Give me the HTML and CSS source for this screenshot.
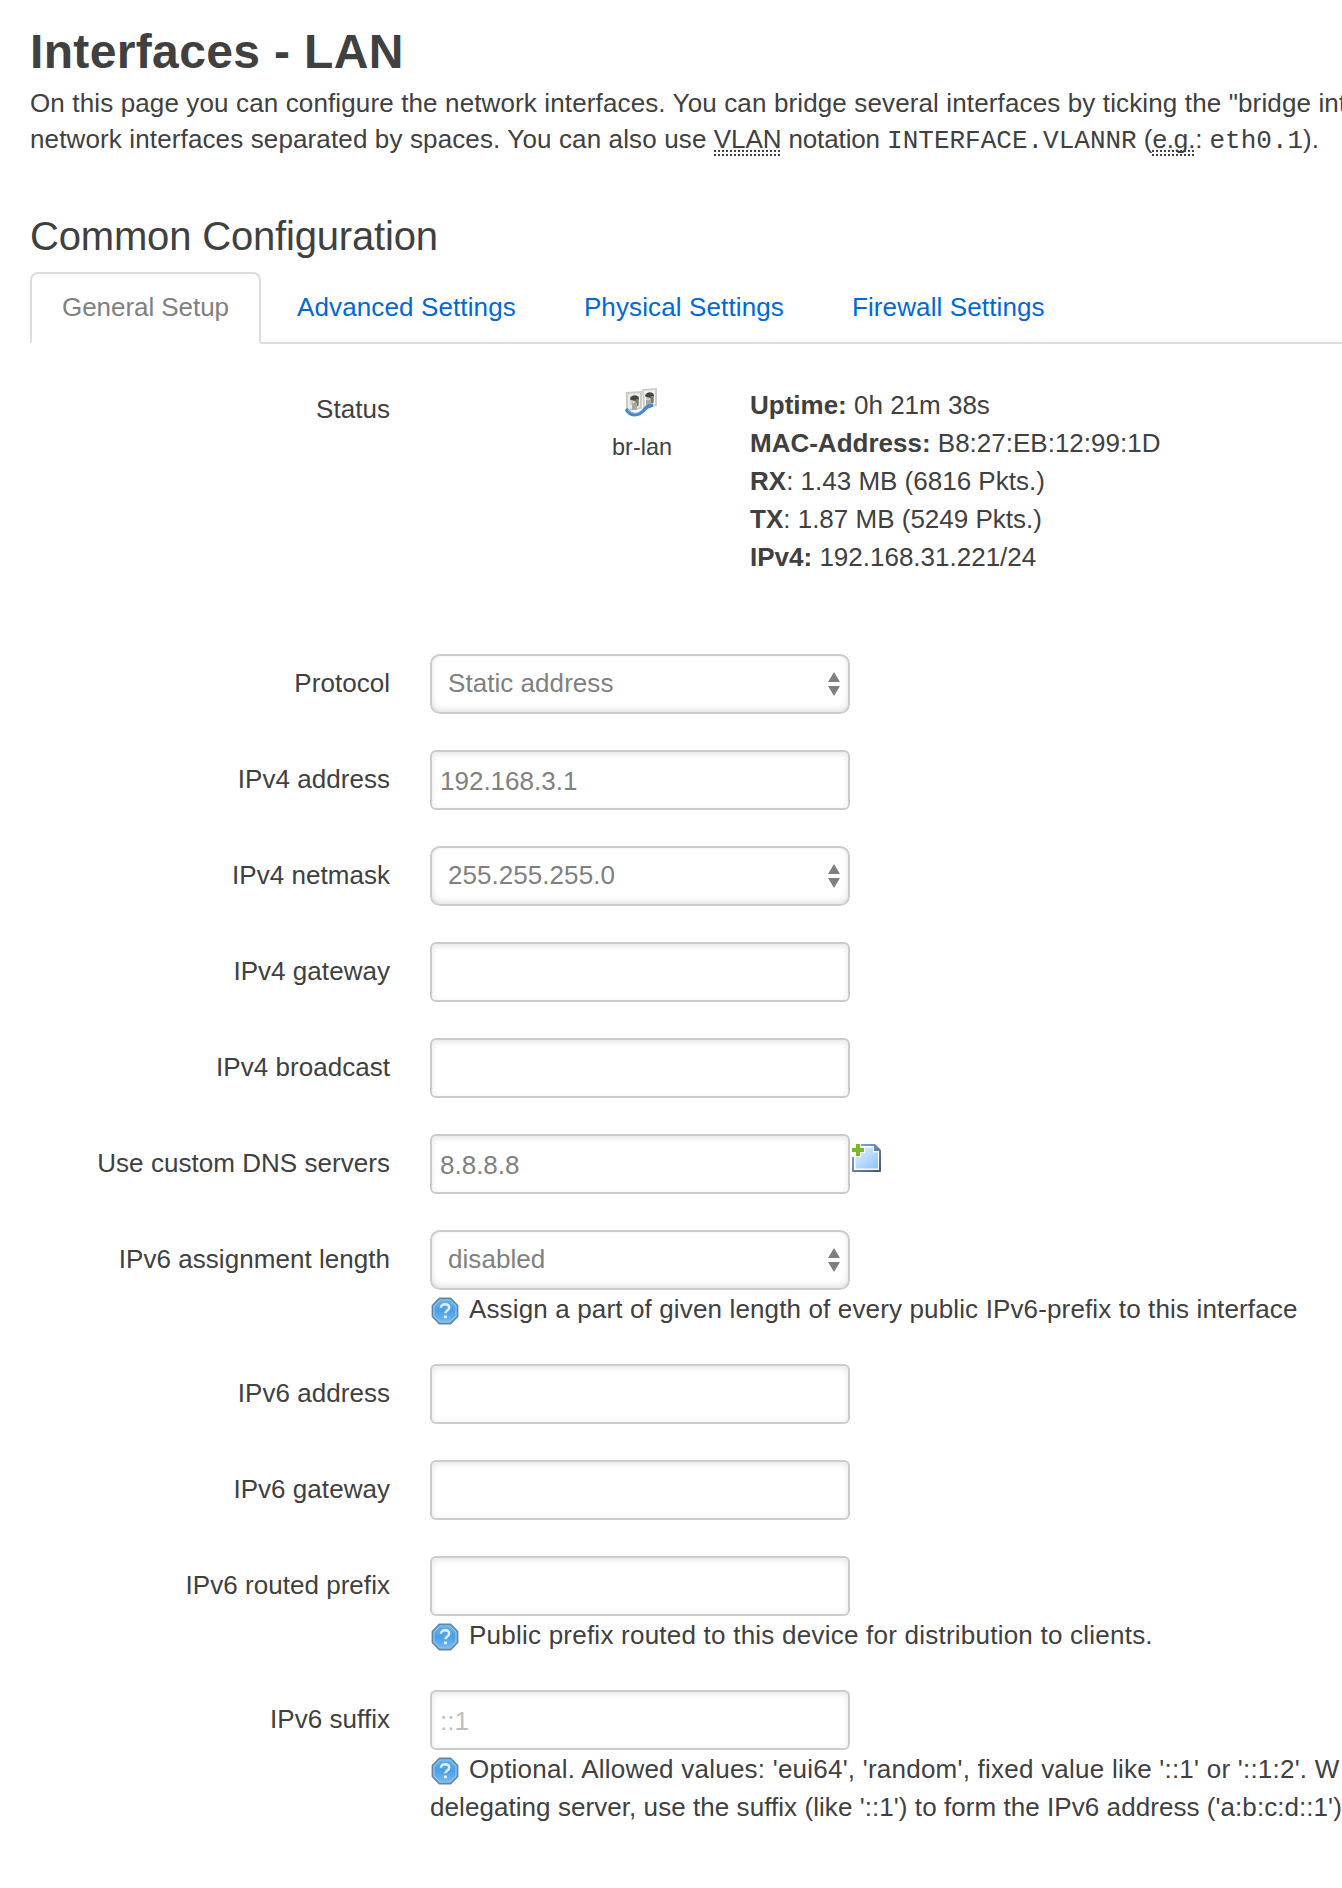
FILE: index.html
```
<!DOCTYPE html>
<html lang="en">
<head>
<meta charset="utf-8">
<title>Interfaces - LAN</title>
<link rel="stylesheet" href="styles.css">
</head>
<body>
<svg class="defs" width="0" height="0" aria-hidden="true">
  <defs>
    <linearGradient id="blue" x1="0" y1="0" x2="0" y2="1"><stop offset="0" stop-color="#63b1ee"/><stop offset=".5" stop-color="#4a9fe6"/><stop offset="1" stop-color="#7abcf2"/></linearGradient>
    <linearGradient id="page" x1="0" y1="0" x2="1" y2="1"><stop offset="0" stop-color="#e2f1ff"/><stop offset="1" stop-color="#8cc4fb"/></linearGradient>
    <linearGradient id="edge" x1="0" y1="0" x2="1" y2="1"><stop offset="0" stop-color="#84b4e4"/><stop offset="1" stop-color="#47536b"/></linearGradient>
    <symbol id="help" viewBox="0 0 28 28">
      <path d="M8.500 1.500h11l7 7v11l-7 7h-11l-7-7v-11z" fill="url(#blue)" stroke="#65849f" stroke-width="1.800"/>
      <path d="M9 3h10l6 6v10l-6 6H9l-6-6V9z" fill="none" stroke="#8cc8f6" stroke-width="1.200"/>
      <path d="M10 10.800c0-2.500 1.700-3.600 4-3.600 2.500 0 4.200 1.200 4.200 3.300 0 3-3.800 2.900-3.800 5.800" fill="none" stroke="#e0f0fc" stroke-width="2.400"/>
      <path d="M12.900 18.500h3v2.700h-3z" fill="#e0f0fc"/>
    </symbol>
  </defs>
</svg>
<main class="page">
  <h1 class="title">Interfaces - LAN</h1>
  <p class="intro">On this page you can configure the network interfaces. You can bridge several interfaces by ticking the "bridge int<br>network interfaces separated by spaces. You can also use <span class="notation"><abbr class="abbr">VLAN</abbr> notation <code class="code">INTERFACE.VLANNR</code> (<abbr class="abbr">e.g.</abbr>: <code class="code">eth0.1</code>).</span></p>

  <h2 class="section-title">Common Configuration</h2>
  <nav class="tabs">
    <a class="tab tab-active">General Setup</a>
    <a class="tab">Advanced Settings</a>
    <a class="tab">Physical Settings</a>
    <a class="tab">Firewall Settings</a>
  </nav>

  <section class="status">
    <div class="label">Status</div>
    <div class="device">
      <svg class="device-icon" width="34" height="30" viewBox="0 0 34 30">
        <path d="M18 2l13-1v16l-12 2z" fill="#f1f1ef" stroke="#cfcfcb" stroke-width="2"/>
        <path d="M2 5l14-1v16L2 22z" fill="#ededeb" stroke="#cbcbc7" stroke-width="2"/>
        <path d="M5 8h9v9H5zM21 5h8v9h-8z" fill="#cfcfca"/>
        <path d="M5 11c1-5 9-5 9 0l-3 2-5-1zM20 8c1-5 9-5 9 0l-3 2-5-1z" fill="#454541"/>
        <path d="M12 11v7M27 8v7" stroke="#77776f" stroke-width="3"/>
        <path d="M7 15h5v7H7zM21 12h5v6h-5z" fill="#a9a9a2"/>
        <path d="M1 21c5 8 13 7 18 1 3-4 6-4 9-5" fill="none" stroke="#4a86ca" stroke-width="3.500"/>
        <path d="M3 22c6 5 10 4 15-1" fill="none" stroke="#8bb8e9" stroke-width="1"/>
      </svg>
      <span class="device-name">br-lan</span>
    </div>
    <div class="stats">
      <div><b>Uptime:</b> 0h 21m 38s</div>
      <div><b>MAC-Address:</b> B8:27:EB:12:99:1D</div>
      <div><b>RX</b>: 1.43 MB (6816 Pkts.)</div>
      <div><b>TX</b>: 1.87 MB (5249 Pkts.)</div>
      <div><b>IPv4:</b> 192.168.31.221/24</div>
    </div>
  </section>

  <form class="form">
    <div class="row"><label class="label">Protocol</label><div class="field"><div class="control select"><span>Static address</span><svg class="arrows" width="12" height="24" viewBox="0 0 12 24"><path d="M0 10L6 0l6 10zM0 14h12L6 24z"/></svg></div></div></div>
    <div class="row"><label class="label">IPv4 address</label><div class="field"><div class="control input">192.168.3.1</div></div></div>
    <div class="row"><label class="label">IPv4 netmask</label><div class="field"><div class="control select"><span>255.255.255.0</span><svg class="arrows" width="12" height="24" viewBox="0 0 12 24"><path d="M0 10L6 0l6 10zM0 14h12L6 24z"/></svg></div></div></div>
    <div class="row"><label class="label">IPv4 gateway</label><div class="field"><div class="control input"></div></div></div>
    <div class="row"><label class="label">IPv4 broadcast</label><div class="field"><div class="control input"></div></div></div>
    <div class="row"><label class="label">Use custom DNS servers</label><div class="field with-action"><div class="control input">8.8.8.8</div>
      <svg class="add" width="30" height="30" viewBox="0 0 30 30">
        <path d="M2 1h22l6 6v21q0 1-1 1H2q-1 0-1-1V2z" fill="url(#edge)"/>
        <path d="M3 3h20v5h5v19H3z" fill="#fff"/>
        <path d="M4.500 4.500H22v5h5v16H4.500z" fill="url(#page)"/>
        <path d="M0 0h10v4h4v6h-4v4H0z" fill="#fff"/>
        <path d="M5 1h4v4h4v4H9v4H5V9H1V5h4z" fill="#77b82d"/>
      </svg></div></div>
    <div class="row"><label class="label">IPv6 assignment length</label><div class="field"><div class="control select"><span>disabled</span><svg class="arrows" width="12" height="24" viewBox="0 0 12 24"><path d="M0 10L6 0l6 10zM0 14h12L6 24z"/></svg></div>
      <div class="help"><svg class="help-icon"><use href="#help"/></svg>Assign a part of given length of every public IPv6-prefix to this interface</div></div></div>
    <div class="row"><label class="label">IPv6 address</label><div class="field"><div class="control input"></div></div></div>
    <div class="row"><label class="label">IPv6 gateway</label><div class="field"><div class="control input"></div></div></div>
    <div class="row"><label class="label">IPv6 routed prefix</label><div class="field"><div class="control input"></div>
      <div class="help help-wide"><svg class="help-icon"><use href="#help"/></svg>Public prefix routed to this device for distribution to clients.</div></div></div>
    <div class="row"><label class="label">IPv6 suffix</label><div class="field"><div class="control input placeholder">::1</div>
      <div class="help help-wide"><svg class="help-icon"><use href="#help"/></svg>Optional. Allowed values: 'eui64', 'random', fixed value like '::1' or '::1:2'. W</div>
      <div class="help help-tight">delegating server, use the suffix (like '::1') to form the IPv6 address ('a:b:c:d::1')</div></div></div>
  </form>
</main>
</body>
</html>
```
FILE: styles.css
```
* { box-sizing: border-box; }

body {
  margin: 0;
  background: #fff;
  color: #404040;
  font: 26px/38px "Liberation Sans", Arial, sans-serif;
  overflow: hidden;
}

.defs { display: block; height: 0; }

.page {
  width: 1342px;
  height: 1888px;
  padding: 17px 0 0 30px;
  overflow: hidden;
  white-space: nowrap;
}

.title {
  margin: 0;
  font-size: 48px;
  line-height: 70px;
  font-weight: bold;
  letter-spacing: .35px;
}

.intro {
  margin: -2px 0 44px;
  line-height: 36px;
  letter-spacing: .13px;
}

.notation { letter-spacing: -.12px; }

.abbr {
  text-decoration: none;
  background: repeating-linear-gradient(90deg, #404040 0 2px, transparent 2px 4px) 0 26px / 100% 2px no-repeat,
    repeating-linear-gradient(90deg, #404040 0 2px, transparent 2px 4px) 0 30px / 100% 2px no-repeat;
  padding-bottom: 4px;
}

.code {
  font: 26px/1 "Liberation Mono", monospace;
  letter-spacing: 0;
}

.section-title {
  margin: 0 0 1px;
  font-size: 40px;
  line-height: 70px;
  font-weight: normal;
  letter-spacing: -.17px;
}

.tabs {
  display: flex;
  height: 72px;
  border-bottom: 2px solid #ddd;
}

.tab {
  height: 72px;
  margin-right: 4px;
  padding: 0 30px;
  border: 2px solid transparent;
  line-height: 66px;
  letter-spacing: .12px;
  color: #0069d6;
}

.tab-active {
  color: #808080;
  background: #fff;
  border-color: #ddd;
  border-bottom-color: #fff;
  border-radius: 8px 8px 0 0;
  letter-spacing: -.05px;
}

.status {
  display: flex;
  height: 274px;
  margin-top: 36px;
}

.label {
  width: 360px;
  margin-right: 40px;
  padding-top: 10px;
  text-align: right;
  letter-spacing: .04px;
  flex: none;
}

.device {
  width: 212px;
  margin-left: 106px;
  display: flex;
  flex-direction: column;
  align-items: center;
  padding-top: 8px;
}

.device-icon { display: block; }

.device-name {
  margin-top: 10px;
  font-size: 23.4px;
}

.stats { padding-top: 6px; margin-left: 2px; }

.row {
  display: flex;
  margin-bottom: 36px;
}

.control {
  display: flex;
  align-items: center;
  width: 420px;
  height: 60px;
  border: 2px solid #ccc;
  border-radius: 6px;
  color: #808080;
  box-shadow: inset 0 2px 6px rgba(0, 0, 0, .1);
}

.input { padding: 1px 8px 0; }

.select {
  justify-content: space-between;
  padding: 0 8px 2px 16px;
  border-radius: 10px;
  letter-spacing: .05px;
  box-shadow: inset 0 -2px 6px rgba(0, 0, 0, .13);
}

.arrows { fill: #808080; margin-top: 2px; }

.placeholder { color: #bfbfbf; }

.with-action { display: flex; }

.add { margin: 9px 0 0 1px; }

.help { height: 38px; letter-spacing: .14px; }

.help-wide { letter-spacing: .23px; }

.help-tight { letter-spacing: .06px; }

.help-icon {
  width: 28px;
  height: 28px;
  margin: 0 10px 0 1px;
  vertical-align: -7px;
}
```
